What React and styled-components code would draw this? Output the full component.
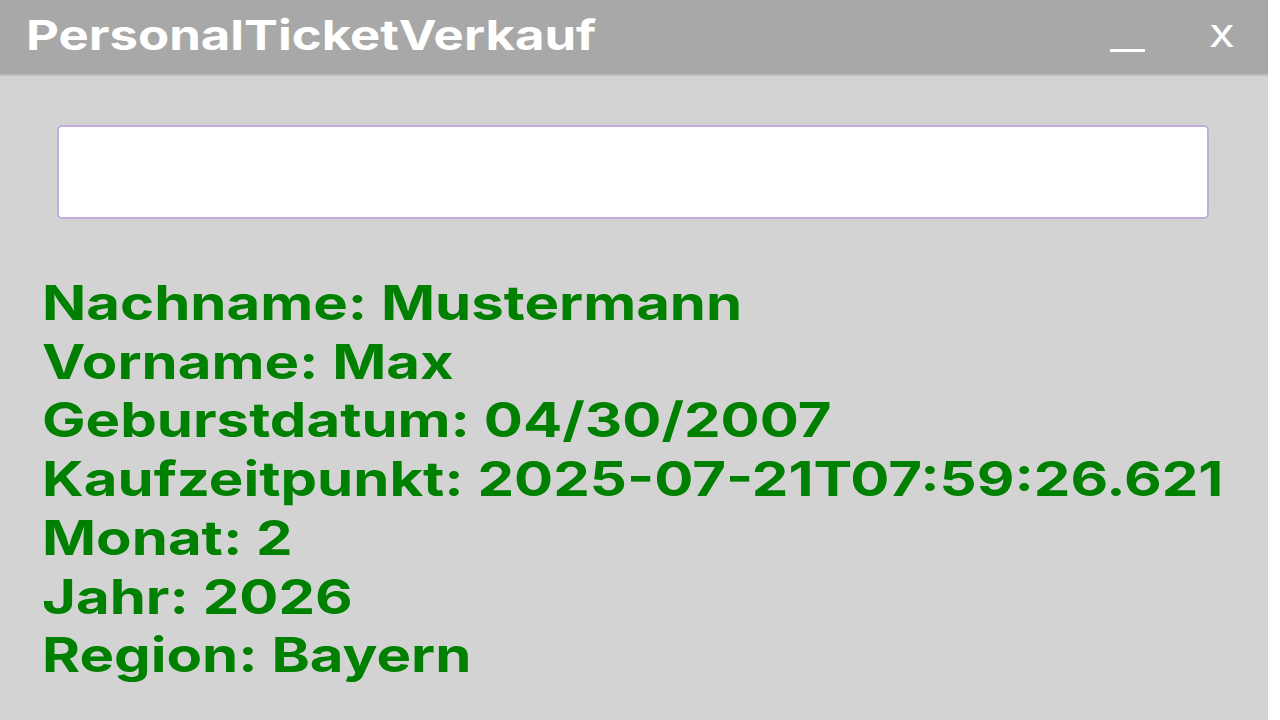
import React from 'react';
import styled, { createGlobalStyle } from 'styled-components';

const GlobalStyle = createGlobalStyle`
  html, body {
    margin: 0;
    padding: 0;
    background: #ffffff;
  }
  body {
    font-family: Inter, "Liberation Sans", sans-serif;
  }
`;

const Window = styled.div`
  width: 1268px;
  height: 720px;
  background: #d3d3d3;
  display: flex;
  flex-direction: column;
  overflow: hidden;
`;

const TitleBar = styled.div`
  height: 76px;
  background: #a8a8a8;
  border-bottom: 2px solid #bdbdbd;
  display: flex;
  align-items: center;
  padding: 0 0 0 26px;
  box-sizing: border-box;
`;

const Title = styled.h1`
  flex: 1;
  margin: 0;
  margin-top: -4px;
  font-size: 41px;
  font-weight: 700;
  color: #ffffff;
  transform: scaleX(1.24);
  transform-origin: left center;
`;

const Controls = styled.div`
  display: flex;
  align-items: center;
  gap: 66px;
  padding-right: 35px;
`;

const Minimize = styled.span`
  display: block;
  width: 35px;
  height: 3px;
  background: #ffffff;
  margin-top: 26px;
`;

const Close = styled.span`
  font-size: 40px;
  font-weight: 400;
  color: #ffffff;
  line-height: 1;
  margin-top: -8px;
  transform: scaleX(1.2);
`;

const Body = styled.div`
  display: flex;
  flex-direction: column;
  padding: 49px 59px 0 42px;
`;

const SearchInput = styled.input`
  margin-left: 15px;
  height: 94px;
  box-sizing: border-box;
  border: 2px solid #bfaed9;
  border-radius: 5px;
  background: #ffffff;
  outline: none;
  font-size: 32px;
  font-family: inherit;
`;

const Details = styled.div`
  margin-top: 55px;
  display: flex;
  flex-direction: column;
`;

const Line = styled.div`
  font-size: 48px;
  font-weight: 700;
  line-height: 58.7px;
  color: #008000;
  white-space: nowrap;
  transform: scaleX(1.21);
  transform-origin: left center;
`;

const ticket = [
  ['Nachname', 'Mustermann'],
  ['Vorname', 'Max'],
  ['Geburstdatum', '04/30/2007'],
  ['Kaufzeitpunkt', '2025-07-21T07:59:26.621'],
  ['Monat', '2'],
  ['Jahr', '2026'],
  ['Region', 'Bayern'],
];

export default function App() {
  return (
    <>
      <GlobalStyle />
      <Window>
        <TitleBar>
          <Title>PersonalTicketVerkauf</Title>
          <Controls>
            <Minimize />
            <Close>x</Close>
          </Controls>
        </TitleBar>
        <Body>
          <SearchInput type="text" />
          <Details>
            {ticket.map(([label, value]) => (
              <Line key={label}>{label}: {value}</Line>
            ))}
          </Details>
        </Body>
      </Window>
    </>
  );
}
